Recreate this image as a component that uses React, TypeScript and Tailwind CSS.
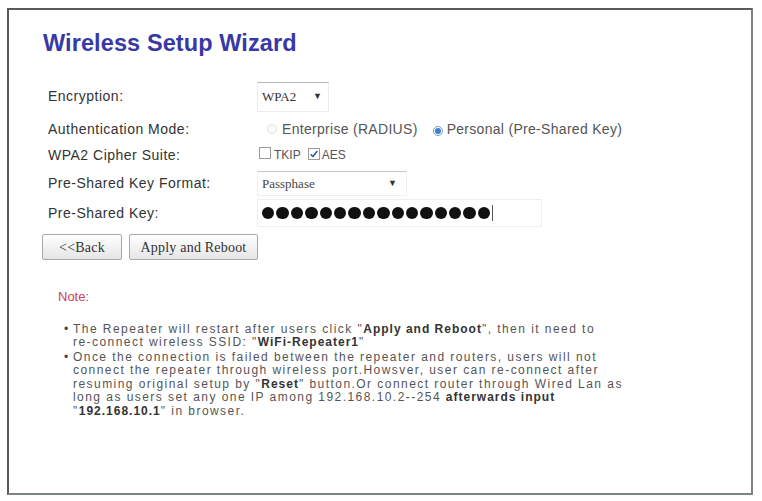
import React from 'react';

const SANS = { fontFamily: '"Liberation Sans", Arial, sans-serif' };

const Radio = ({ checked }: { checked?: boolean }) => (
  <span className={`inline-flex items-center justify-center w-[10px] h-[10px] rounded-full border ${checked ? 'border-[#7a9cc0] bg-white' : 'border-[#e2e2e2] bg-[#fafafa]'}`}>
    {checked && <span className="w-[6px] h-[6px] rounded-full bg-[#3b7fd0]" />}
  </span>
);

const Checkbox = ({ checked }: { checked?: boolean }) => (
  <span className="inline-flex items-center justify-center w-[12px] h-[12px] border border-[#9a9a9a] bg-white">
    {checked && (
      <svg viewBox="0 0 12 12" className="w-[10px] h-[10px]">
        <path d="M2 6.5 L4.8 9 L10 2.5" fill="none" stroke="#2a55a8" strokeWidth="1.8" />
      </svg>
    )}
  </span>
);

const Caret = () => <span className="text-[9px] text-[#333] leading-none">▼</span>;

const Btn = ({ children, w }: { children: React.ReactNode; w: string }) => (
  <button className={`${w} h-[26px] border border-[#a8a8a8] rounded-[2px] bg-gradient-to-b from-white to-[#e6e6e6] text-[14px] text-[#333] font-['Liberation_Serif',serif] tracking-[0.2px]`}>
    {children}
  </button>
);

export default function App() {
  return (
    <div className="w-[762px] h-[501px] bg-white pt-[8px] pl-[7px]" style={SANS}>
      <div className="w-[746px] h-[487px] border-2 border-t-[#5a5a5a] border-l-[#5a5a5a] border-r-[#7d8582] border-b-[#7d8582] pl-[34px]">
        <h1 className="mt-[19px] text-[23.5px] leading-[28px] font-bold text-[#3838a6] tracking-[0.1px]">Wireless Setup Wizard</h1>

        <div className="mt-[24px] text-[14px] text-[#333] tracking-[0.5px]">
          <div className="flex items-center h-[31px]">
            <div className="w-[214px] pl-[5px]">Encryption:</div>
            <div className="w-[72px] h-[30px] border border-[#ececec] border-t-[#b5b5b5] flex items-center justify-between pl-[4px] pr-[6px] font-['Liberation_Serif',serif] text-[13px] tracking-normal text-[#333]">
              <span>WPA2</span>
              <Caret />
            </div>
          </div>

          <div className="flex items-center h-[34px]">
            <div className="w-[214px] pl-[5px]">Authentication Mode:</div>
            <div className="flex items-center text-[#555] tracking-[0.3px]">
              <span className="ml-[10px]"><Radio /></span>
              <span className="ml-[5px]">Enterprise (RADIUS)</span>
              <span className="ml-[15px]"><Radio checked /></span>
              <span className="ml-[4px]">Personal (Pre-Shared Key)</span>
            </div>
          </div>

          <div className="flex items-center h-[18px]">
            <div className="w-[214px] pl-[5px]">WPA2 Cipher Suite:</div>
            <div className="flex items-center text-[#555] text-[12px] tracking-normal">
              <span className="ml-[2px]"><Checkbox /></span>
              <span className="ml-[3px]">TKIP</span>
              <span className="ml-[7px]"><Checkbox checked /></span>
              <span className="ml-[2px]">AES</span>
            </div>
          </div>

          <div className="flex items-center h-[25px] mt-[7px]">
            <div className="w-[214px] pl-[5px]">Pre-Shared Key Format:</div>
            <div className="w-[150px] h-[25px] border border-[#f0f0f0] border-t-[#c8c8c8] flex items-center justify-between pl-[4px] pr-[9px] font-['Liberation_Serif',serif] text-[13px] tracking-normal text-[#444]">
              <span>Passphase</span>
              <Caret />
            </div>
          </div>

          <div className="flex items-center h-[28px] mt-[3px]">
            <div className="w-[214px] pl-[5px]">Pre-Shared Key:</div>
            <div className="w-[285px] h-[28px] border border-[#eeeeee] flex items-center pl-[4px]">
              <div className="flex items-center gap-[2px]">
                {Array.from({ length: 16 }).map((_, i) => (
                  <span key={i} className="w-[12.4px] h-[12.4px] rounded-full bg-[#111]" />
                ))}
              </div>
              <span className="ml-[2px] w-px h-[16px] bg-[#555]" />
            </div>
          </div>

          <div className="flex items-center gap-[7px] mt-[7px] -ml-px tracking-normal">
            <Btn w="w-[80px]">&lt;&lt;Back</Btn>
            <Btn w="w-[129px]">Apply and Reboot</Btn>
          </div>
        </div>

        <div className="mt-[27px] pl-[15px] text-[13px] text-[#d0405c]">Note:</div>

        <ul className="mt-[16px] pl-[21px] text-[12px] leading-[13.5px] text-[#555] tracking-[1.45px]">
          <li className="flex">
            <span className="w-[9px] shrink-0 text-[#444] tracking-normal">•</span>
            <span>
              The Repeater will restart after users click "<b className="text-[#333] tracking-[1px]">Apply and Reboot</b>", then it need to<br />
              re-connect wireless SSID: "<b className="text-[#333] tracking-[1px]">WiFi-Repeater1</b>"
            </span>
          </li>
          <li className="flex mt-[1px]">
            <span className="w-[9px] shrink-0 text-[#444] tracking-normal">•</span>
            <span>
              Once the connection is failed between the repeater and routers, users will not<br />
              connect the repeater through wireless port.Howsver, user can re-connect after<br />
              resuming original setup by "<b className="text-[#333] tracking-[1px]">Reset</b>" button.Or connect router through Wired Lan as<br />
              long as users set any one IP among 192.168.10.2--254 <b className="text-[#333] tracking-[1px]">afterwards input</b><br />
              "<b className="text-[#333] tracking-[1px]">192.168.10.1</b>" in browser.
            </span>
          </li>
        </ul>
      </div>
    </div>
  );
}
